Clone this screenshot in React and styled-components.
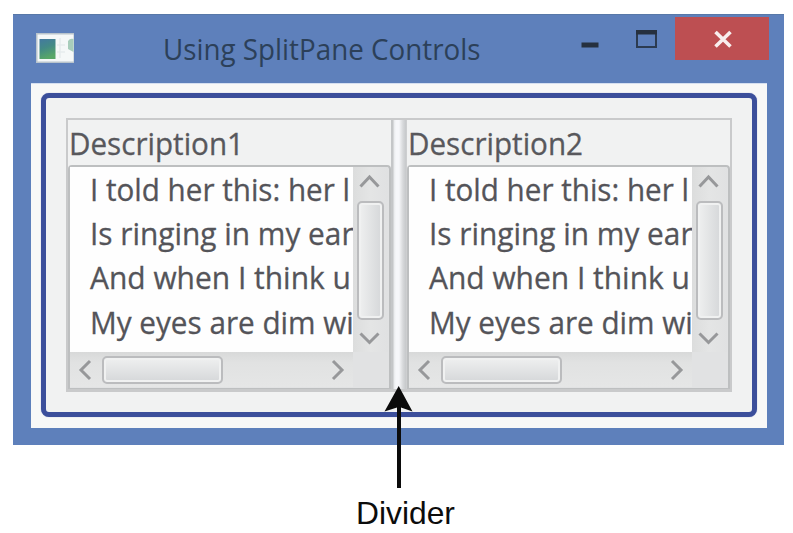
import React from "react";
import styled, { createGlobalStyle } from "styled-components";

const Global = createGlobalStyle`
  * { box-sizing: border-box; }
  html, body { margin: 0; padding: 0; background: #fff; overflow: hidden; }
`;

const Page = styled.main`
  width: 793px;
  height: 533px;
  padding: 14px 9px 0 13px;
  overflow: hidden;
  background: #fff;
`;

const Window = styled.section`
  width: 771px;
  height: 431px;
  padding: 0 17px 17px 18px;
  background: #5e80bb;
  border-top: 1px solid #5878a8;
  display: flex;
  flex-direction: column;
`;

const TitleBar = styled.header`
  height: 68px;
  flex: none;
  display: flex;
  align-items: flex-start;
`;

const AppIcon = styled.svg`
  display: block;
  flex: none;
  margin: 18px 0 0 5px;
`;

const Stretch = styled.span`
  display: inline-block;
  transform-origin: 0 50%;
  transform: scaleX(${(p) => p.$x});
  white-space: pre;
`;

const Title = styled.h1`
  margin: 14px 0 0 89px;
  width: 416px;
  flex: none;
  font: 400 29px/40px "Open Sans", "Noto Sans", sans-serif;
  color: #2c4059;
`;

const WindowButton = styled.button`
  border: 0;
  padding: 0;
  margin: 2px 0 0;
  width: ${(p) => p.$w}px;
  height: 43px;
  flex: none;
  background: ${(p) => p.$bg || "transparent"};
  svg { display: block; }
`;

const Client = styled.div`
  flex: 1;
  padding: 10px 10px 11px;
  background: #f8f8f7;
  border-top: 1px solid #d5dff0;
`;

const Frame = styled.div`
  height: 324px;
  margin-top: -1px;
  padding: 20px 20px 21px;
  border: 5px solid #3c4f9b;
  border-radius: 8px;
  background: #f1f2f2;
  box-shadow: 0 0 1px #8d98c8;
`;

const SplitPane = styled.div`
  width: 666px;
  height: 274px;
  display: grid;
  grid-template-columns: 323px 16px 323px;
  border: solid #c9cacb;
  border-width: 2px 2px 3px 2px;
  background: #f1f2f2;
`;

const Divider = styled.div`
  background: linear-gradient(90deg, #c4c6c8 0 2px, #e8eaec 3px, #f6f7fa 5px 8px, #e6e7e9 10px, #d6d8da 12px, #c6c8ca 15px, #d4d5d6 16px);
`;

const Pane = styled.div`
  min-width: 0;
  display: flex;
  flex-direction: column;
  overflow: hidden;
`;

const Label = styled.div`
  height: 45px;
  flex: none;
  padding-left: ${(p) => p.$pad}px;
  font: 400 31px/46px "Open Sans", "Noto Sans", sans-serif;
  color: #58585c;
  -webkit-text-stroke: 0.3px #58585c;
`;

const TextArea = styled.div`
  height: 224px;
  flex: none;
  display: grid;
  grid-template-columns: 283px 35px;
  grid-template-rows: 185px 35px;
  border: solid #bdbfc0;
  border-width: 2px 2px 1px 2px;
  border-radius: 4px 4px 0 0;
  background: #e1e2e3;
`;

const Viewport = styled.div`
  overflow: hidden;
  background: #fefefe;
  padding: 0 0 0 20px;
  font: 400 31px/44.2px "Open Sans", "Noto Sans", sans-serif;
  color: #545459;
  -webkit-text-stroke: 0.3px #545459;
`;

const Line = styled.div`
  height: 44.2px;
  white-space: pre;
`;

const VBar = styled.div`
  display: flex;
  flex-direction: column;
  align-items: center;
  padding-right: 2px;
  background: linear-gradient(90deg, #dcdddd, #e4e5e5 50%, #e0e1e2);
`;

const HBar = styled.div`
  display: flex;
  align-items: center;
  background: linear-gradient(#d8d9d9, #e1e2e2 30%, #e5e6e6);
`;

const Arrow = styled.svg`
  display: block;
  flex: none;
`;

const Thumb = styled.div`
  flex: none;
  width: ${(p) => (p.$vertical ? 27 : 121)}px;
  height: ${(p) => (p.$vertical ? 119 : 28)}px;
  margin-left: ${(p) => (p.$vertical ? 1 : -2)}px;
  border: 2px solid #bbbcbe;
  border-radius: 5px;
  box-shadow: inset 0 0 0 2px #f0f1f1;
  background: linear-gradient(${(p) => (p.$vertical ? "90deg" : "180deg")}, #eff0f0, #d5d7d9);
`;

const Gap = styled.div`
  flex: 1;
`;

const Callout = styled.figure`
  position: relative;
  margin: -59px 0 0 343px;
  width: 100px;
  height: 148px;
  display: flex;
  flex-direction: column;
`;

const CalloutText = styled.figcaption`
  margin-top: 5px;
  font: 400 31.8px/40px "Liberation Sans", Arial, sans-serif;
  color: #0c0c0c;
`;

const LINES = [
  { text: "I told her this: her l", stretch: 0.955 },
  { text: "Is ringing in my ear", stretch: 0.962 },
  { text: "And when I think u", stretch: 0.966 },
  { text: "My eyes are dim wi", stretch: 0.958 },
];

const CHEVRONS = {
  up: "M7.5 19.5 L16.5 10 L25.5 19.5",
  down: "M7.5 13.5 L16.5 22.5 L25.5 13.5",
  left: "M20 8 L11 17 L20 26",
  right: "M14 8 L23 17 L14 26",
};

function Chevron({ dir }) {
  return (
    <Arrow width="34" height="34" viewBox="0 0 34 34">
      <path d={CHEVRONS[dir]} fill="none" stroke="#97989a" strokeWidth="3" />
    </Arrow>
  );
}

function TextPane({ label, pad }) {
  return (
    <Pane>
      <Label $pad={pad}><Stretch $x={0.955}>{label}</Stretch></Label>
      <TextArea>
        <Viewport>
          {LINES.map((line) => (
            <Line key={line.text}><Stretch $x={line.stretch}>{line.text}</Stretch></Line>
          ))}
        </Viewport>
        <VBar>
          <Chevron dir="up" />
          <Thumb $vertical />
          <Chevron dir="down" />
        </VBar>
        <HBar>
          <Chevron dir="left" />
          <Thumb />
          <Gap />
          <Chevron dir="right" />
        </HBar>
      </TextArea>
    </Pane>
  );
}

export default function App() {
  return (
    <>
      <Global />
      <Page>
        <Window>
          <TitleBar>
            <AppIcon width="38" height="30" viewBox="0 0 38 30">
              <defs>
                <linearGradient id="tile" x1="0" y1="0" x2="0.3" y2="1">
                  <stop offset="0" stopColor="#4379a0" />
                  <stop offset="0.5" stopColor="#438a86" />
                  <stop offset="1" stopColor="#58a768" />
                </linearGradient>
              </defs>
              <rect width="38" height="30" fill="#b9c4cc" />
              <rect x="1.5" y="1.5" width="36" height="27" fill="#f5f8f8" />
              <rect x="3.5" y="6" width="16" height="20" fill="url(#tile)" />
              <path d="M24 5V25M21 12H29M21 19H29" stroke="#e6ebed" strokeWidth="1.5" />
              <path d="M32 8Q34 5 37.5 6V19L32 16Z" fill="#a8cdbb" />
            </AppIcon>
            <Title><Stretch $x={0.958}>Using SplitPane Controls</Stretch></Title>
            <WindowButton $w={55} aria-label="Minimize">
              <svg width="55" height="43"><rect x="2.5" y="25.5" width="17" height="5" fill="#26303e" /></svg>
            </WindowButton>
            <WindowButton $w={41} aria-label="Maximize">
              <svg width="41" height="43">
                <rect x="3" y="14" width="19" height="16" fill="none" stroke="#2c3b50" strokeWidth="2" />
                <rect x="2" y="13" width="21" height="4.5" fill="#26303e" />
              </svg>
            </WindowButton>
            <WindowButton $w={94} $bg="#bd4f52" aria-label="Close">
              <svg width="94" height="43"><path d="M40.5 15L55.5 29.5M55.5 15L40.5 29.5" stroke="#f8eeee" strokeWidth="3.6" /></svg>
            </WindowButton>
          </TitleBar>
          <Client>
            <Frame>
              <SplitPane>
                <TextPane label="Description1" pad={1} />
                <Divider />
                <TextPane label="Description2" pad={1} />
              </SplitPane>
            </Frame>
          </Client>
        </Window>
        <Callout>
          <svg width="100" height="102" viewBox="0 0 100 102">
            <path d="M42.7 0L56.5 25.5L45 21.5V102H41V21.5L28.5 25.5Z" fill="#0b0b0b" />
          </svg>
          <CalloutText>Divider</CalloutText>
        </Callout>
      </Page>
    </>
  );
}
